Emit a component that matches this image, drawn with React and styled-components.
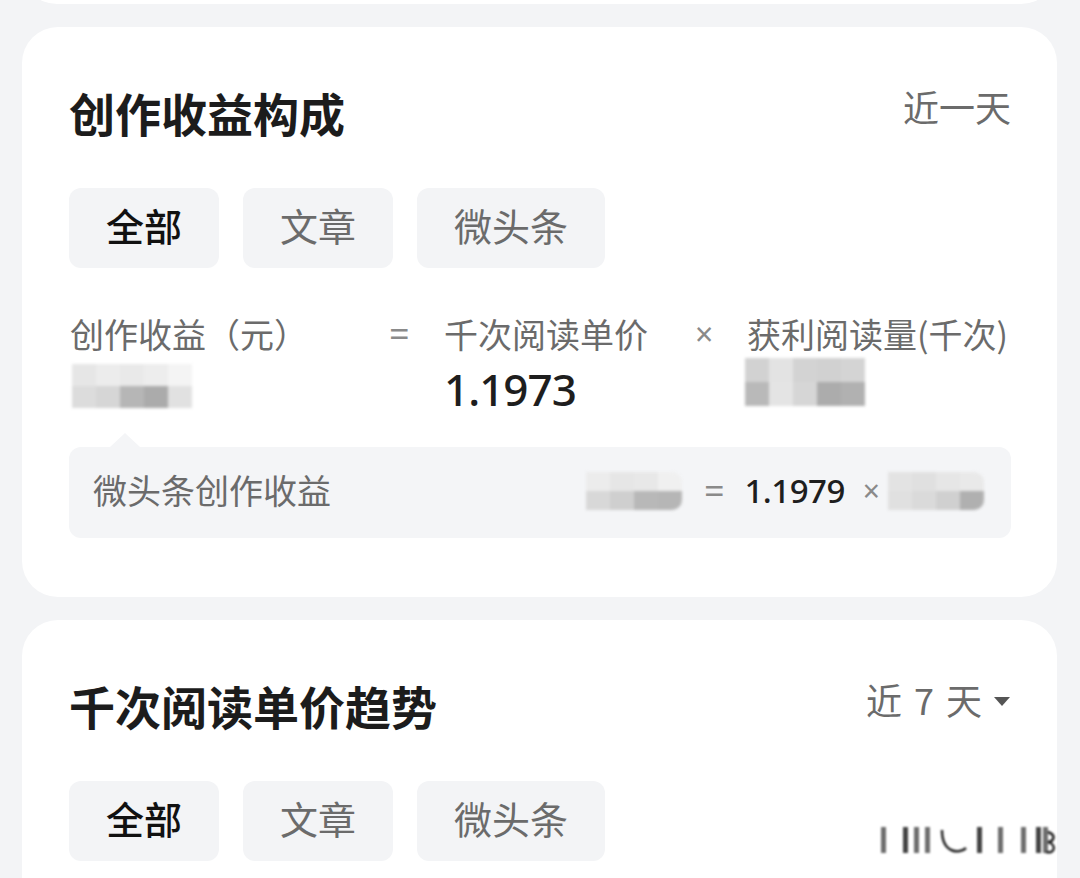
import React from 'react';
import styled, { createGlobalStyle } from 'styled-components';

const GlobalStyle = createGlobalStyle`
  body {
    margin: 0;
    background: #f3f4f6;
    font-family: "Noto Sans CJK SC", "Noto Sans", sans-serif;
  }
`;

const Page = styled.div`
  position: relative;
  width: 1080px;
  height: 878px;
  overflow: hidden;
  background: #f3f4f6;
`;

// bottom edge of the card above, mostly scrolled out of view
const PrevCardClip = styled.div`
  height: 4px;
  margin: 0 23px 0 21px;
  display: flex;
  flex-direction: column;
  justify-content: flex-end;
  overflow: hidden;
`;

const PrevCard = styled.div`
  flex: 0 0 72px;
  background: #fff;
  border-radius: 36px;
`;

const Card = styled.section`
  margin: 23px 23px 0 22px;
  padding: 57px 46px 59px 47px;
  background: #fff;
  border-radius: 36px;
`;

const Header = styled.div`
  display: flex;
  justify-content: space-between;
  align-items: flex-start;
`;

const Title = styled.h2`
  margin: 0;
  font-size: 46px;
  line-height: 56px;
  font-weight: 700;
  color: #1c1c1c;
`;

const Range = styled.div`
  display: flex;
  align-items: center;
  gap: ${p => p.$gap || 0}px;
  font-size: 36px;
  line-height: 44px;
  color: #6b6b6b;
`;

const Caret = styled.span`
  width: 0;
  height: 0;
  border-left: 8px solid transparent;
  border-right: 8px solid transparent;
  border-top: 9px solid #555;
  margin: 4px 1px 0 0;
`;

const Tabs = styled.div`
  display: flex;
  gap: 24px;
  margin-top: 48px;
`;

const Tab = styled.div`
  height: 80px;
  box-sizing: border-box;
  padding: 0 37px 7px;
  display: flex;
  align-items: center;
  border-radius: 12px;
  background: #f3f4f6;
  font-size: 38px;
  font-weight: ${p => (p.$active ? 500 : 400)};
  color: ${p => (p.$active ? '#111' : '#6b6b6b')};
`;

const Formula = styled.div`
  display: grid;
  grid-template-columns: 319px 55px 251px 52px 1fr;
  margin-top: 44px;
  margin-left: 1px;
`;

const Term = styled.div`
  display: flex;
  flex-direction: column;
  gap: ${p => p.$gap || 5}px;
`;

const Label = styled.div`
  font-size: 34px;
  line-height: 44px;
  color: #6b6b6b;
  white-space: nowrap;
`;

const Value = styled.div`
  font-family: "Noto Sans", sans-serif;
  font-size: 44px;
  line-height: 56px;
  font-weight: 500;
  color: #1e1e1e;
  letter-spacing: -1px;
`;

const Op = styled.div`
  font-family: "Noto Sans", sans-serif;
  font-size: ${p => p.$size || 36}px;
  line-height: 44px;
  color: ${p => p.$color || '#8a8a8a'};
  margin-left: ${p => p.$left || 0}px;
`;

const MosaicGrid = styled.div`
  display: grid;
  grid-template-columns: repeat(${p => p.$cols}, ${p => p.$cell}px);
  grid-auto-rows: ${p => p.$row}px;
  margin: ${p => p.$margin || '0'};
  filter: blur(1.5px);
  border-radius: 0 10px 10px 0;
  overflow: hidden;
`;

const Cell = styled.div`
  background: ${p => p.$c};
`;

const Mosaic = ({ rows, cell = 24, row = 22, margin }) => (
  <MosaicGrid $cols={rows[0].length} $cell={cell} $row={row} $margin={margin}>
    {rows.flat().map((c, i) => (
      <Cell key={i} $c={c} />
    ))}
  </MosaicGrid>
);

const Detail = styled.div`
  position: relative;
  margin-top: 30px;
  height: 91px;
  padding: 0 27px 0 24px;
  display: flex;
  align-items: center;
  justify-content: space-between;
  background: #f4f5f7;
  border-radius: 12px;

  &::before {
    content: '';
    position: absolute;
    left: 41px;
    top: -14px;
    border-left: 15px solid transparent;
    border-right: 15px solid transparent;
    border-bottom: 14px solid #f4f5f7;
  }
`;

const DetailLabel = styled.div`
  font-size: 34px;
  line-height: 44px;
  padding-bottom: 6px;
  color: #6b6b6b;
`;

const DetailCalc = styled.div`
  display: flex;
  align-items: center;
  padding-bottom: 4px;
`;

const DetailValue = styled.div`
  font-family: "Noto Sans", sans-serif;
  font-size: 33px;
  font-weight: 500;
  color: #1e1e1e;
  margin: 0 18px 0 20px;
  letter-spacing: -0.5px;
`;

const Watermark = styled.svg`
  position: absolute;
  right: 24px;
  top: 820px;
  filter: blur(1.2px);
`;

const SourceTabs = () => (
  <Tabs>
    <Tab $active>全部</Tab>
    <Tab>文章</Tab>
    <Tab>微头条</Tab>
  </Tabs>
);

const bars = [0, 22, 33, 44, 96, 117, 140, 155, 162, 181, 190, 197];

export default function App() {
  return (
    <Page>
      <GlobalStyle />
      <PrevCardClip>
        <PrevCard />
      </PrevCardClip>

      <Card>
        <Header>
          <Title>创作收益构成</Title>
          <Range>近一天</Range>
        </Header>
        <SourceTabs />

        <Formula>
          <Term>
            <Label>创作收益（元）</Label>
            <Mosaic
              margin="3px 0 0 2px"
              rows={[
                ['#e6e6e6', '#ececec', '#e9e9e9', '#ededed', '#f4f4f4'],
                ['#dcdcdc', '#d6d6d6', '#b6b6b6', '#ababab', '#e1e1e1'],
              ]}
            />
          </Term>
          <Op>=</Op>
          <Term>
            <Label>千次阅读单价</Label>
            <Value>1.1973</Value>
          </Term>
          <Op $size={32}>×</Op>
          <Term>
            <Label>获利阅读量(千次)</Label>
            <Mosaic
              margin="-3px 0 0 -2px"
              rows={[
                ['#d2d2d2', '#e3e3e3', '#d3d3d3', '#d1d1d1', '#d4d4d4'],
                ['#b9b9b9', '#e4e4e4', '#d6d6d6', '#acacac', '#b1b1b1'],
              ]}
              row={24}
            />
          </Term>
        </Formula>

        <Detail>
          <DetailLabel>微头条创作收益</DetailLabel>
          <DetailCalc>
            <Mosaic
              cell={24}
              row={19}
              rows={[
                ['#ececec', '#e6e6e6', '#e8e8e8', '#f0f0f0'],
                ['#d8d8d8', '#cfcfcf', '#b8b8b8', '#b6b6b6'],
              ]}
            />
            <Op $size={36} $left={22}>=</Op>
            <DetailValue>1.1979</DetailValue>
            <Op $size={30}>×</Op>
            <Mosaic
              cell={24}
              row={19}
              margin="0 0 0 8px"
              rows={[
                ['#e3e3e3', '#e0e0e0', '#e6e6e6', '#e9e9e9'],
                ['#e0e0e0', '#dadada', '#d0d0d0', '#b0b0b0'],
              ]}
            />
          </DetailCalc>
        </Detail>
      </Card>

      <Card>
        <Header>
          <Title>千次阅读单价趋势</Title>
          <Range $gap={12}>
            <span>近</span>
            <span>7</span>
            <span>天</span>
            <Caret />
          </Range>
        </Header>
        <SourceTabs />
      </Card>

      <Watermark width="180" height="40" viewBox="0 0 180 40">
        {bars.map((x, i) => (
          <rect key={i} x={x + 5} y="7" width="5" height="26" fill={i % 3 === 1 ? '#222' : '#555'} opacity="0.85" />
        ))}
        <path d="M66 10 C66 34 84 34 90 28" stroke="#222" strokeWidth="2.5" fill="none" />
        <path d="M172 12 C182 16 176 22 172 22 C180 24 180 34 170 32" stroke="#222" strokeWidth="2.5" fill="none" />
      </Watermark>
    </Page>
  );
}
